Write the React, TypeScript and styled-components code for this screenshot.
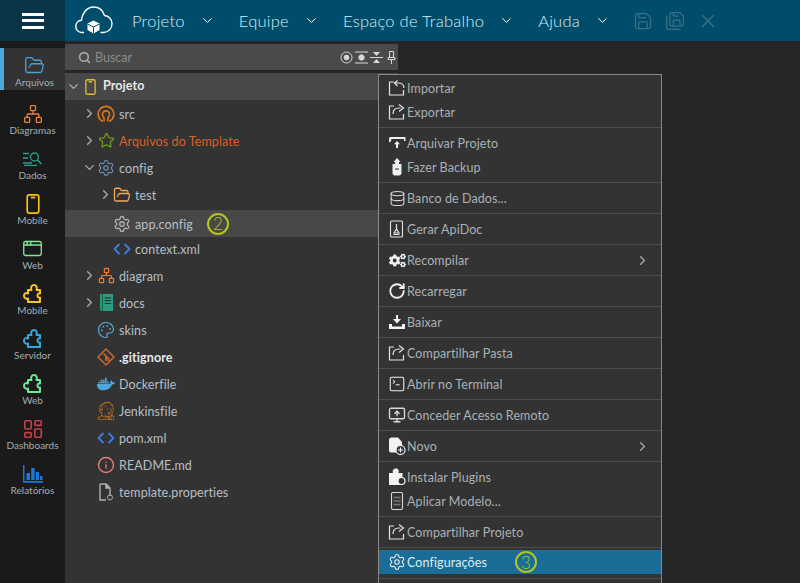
import React from 'react'
import styled, { createGlobalStyle } from 'styled-components'
import {
  AppWindow,
  ChevronDown,
  ChevronRight,
  Code,
  Database,
  FolderOpen,
  Info,
  LayoutDashboard,
  MonitorUp,
  Network,
  Palette,
  RotateCw,
  Save,
  SaveAll,
  Search,
  Settings,
  SquareTerminal,
  Star,
  X
} from 'lucide-react'
import { FaCogs, FaDocker, FaJenkins } from 'react-icons/fa'

const FONT = `Lato, "Open Sans", "Liberation Sans", sans-serif`

const GlobalStyle = createGlobalStyle`
  html, body {
    margin: 0;
    height: 100%;
    background: #262626;
    overflow: hidden;
  }
  body {
    font-family: ${FONT};
  }
`

const CloudLogo = () => (
  <svg width="38" height="30" viewBox="0 0 38 30" fill="none" stroke="#fff" strokeWidth="1.4">
    <path d="M9 26.500H7C3 26.500 .8 23.500 .8 20.500c0-3.400 2.400-6 5.600-6.200C7 8 11.500 1 18.500 1c5.500 0 9.500 3.500 11 8.500 4 .3 7.500 3.500 7.500 8 0 5-3.500 9-8.500 9h-3" />
    <path d="M18.500 14.500l6 3v6.500l-6 3.500-6-3.500v-6.500z" fill="#fff" stroke="none" />
    <path d="M12.500 18l6 3 6-3M18.500 21v6" stroke="#004d6b" strokeWidth="1" />
  </svg>
)

const PhoneIcon = ({ color, width, height }: { color: string; width: number; height: number }) => (
  <svg width={width} height={height} viewBox="0 0 12 18" fill="none" stroke={color} strokeWidth="1.500">
    <rect x=".8" y=".8" width="10.400" height="16.400" rx="1.800" />
    <path d="M4 3.200h4" strokeWidth="1.600" />
  </svg>
)

const PuzzleIcon = ({ color }: { color: string }) => (
  <svg width="21" height="21" viewBox="0 0 21 21" fill="none" stroke={color} strokeWidth="2" strokeLinejoin="round">
    <path d="M6 7h3.500C8.500 4.500 9.500 2 12 2s3.500 2.500 2.500 5H18v3.500c-1.500-.5-2.500.5-2.500 2s1 2.500 2.500 2V19H6v-3.500c-2 .8-4-.5-4-2.800S4 9.500 6 10.500z" />
  </svg>
)

const DadosIcon = () => (
  <svg width="20" height="14" viewBox="0 0 20 14" fill="none" stroke="#2e9e8a" strokeWidth="1.300">
    <path d="M0 1.500h6M0 6h5M0 11h9M1 13.500h13" />
    <circle cx="11.500" cy="5" r="4" />
    <path d="M14.500 8l4 4" strokeWidth="1.600" />
  </svg>
)

const RelatoriosIcon = () => (
  <svg width="20" height="18" viewBox="0 0 20 18" fill="#1a78d8">
    <path d="M0 0h1.500v16H20v1.800H0z" />
    <rect x="3.500" y="8" width="3.500" height="7" />
    <rect x="8.200" y="3" width="3.500" height="12" />
    <rect x="13" y="7" width="3" height="8" />
    <rect x="17" y="11" width="2.500" height="4" />
  </svg>
)

const SrcIcon = () => (
  <svg width="18" height="18" viewBox="0 0 18 18" fill="none" stroke="#d9761a" strokeWidth="1.700" strokeLinecap="round">
    <path d="M5.500 16.200A7.800 7.800 0 1 1 12.500 16.200" />
    <path d="M7.200 15.500l-.4-3.200A3.600 3.600 0 1 1 11.200 12.300l-.4 3.200" />
  </svg>
)

const GitDiamond = () => (
  <svg width="18" height="18" viewBox="0 0 18 18" fill="none" stroke="#c76a2c" strokeWidth="1.500">
    <path d="M9 1l8 8-8 8-8-8z" strokeLinejoin="round" />
    <path d="M6.500 5.500l5 5v2.500M9 8v5" strokeWidth="1.700" />
  </svg>
)

const BoxArrow = ({ back }: { back?: boolean }) => (
  <svg width="18" height="18" viewBox="0 0 18 18" fill="none" stroke="#e4e4e4" strokeWidth="1.200">
    <path d="M6 3H1.500v13h14v-5" />
    {back ? (
      <path d="M16 9c0-3-2-5-6-5H7M9.500 1.500L6.500 4l3 3" />
    ) : (
      <path d="M5 11c0-4 2-6 6-6h1.500M11 1.500L15.500 5 11 8.500" />
    )}
  </svg>
)

const ArchiveIcon = () => (
  <svg width="18" height="18" viewBox="0 0 18 18" fill="#eee">
    <path d="M1 4.500C1 3.500 2 3 3 3h13v2H3.500L2.500 8H1z" />
    <path d="M16 3h1.500v4H16z" />
    <path d="M9 7l3 3.200h-2v3.800H8v-3.800H6z" />
  </svg>
)

const BackupIcon = () => (
  <svg width="18" height="18" viewBox="0 0 18 18" fill="#eee">
    <path d="M9 0l3.500 4H11v2h2.500v9c0 1.500-1 2.500-2.500 2.500H7C5.500 17.500 4.500 16.500 4.500 15V6H7V4H5.500z" />
    <path d="M7 11h4" stroke="#333" strokeWidth="1" />
  </svg>
)

const ApiDocIcon = () => (
  <svg width="18" height="18" viewBox="0 0 18 18" fill="none" stroke="#e4e4e4" strokeWidth="1.100">
    <rect x="2.500" y="1" width="12" height="16" rx="1" />
    <path d="M8.500 4v5M6 13l2.500-4 2.500 4zM5.500 14.500h6" strokeWidth="1.200" />
  </svg>
)

const DownloadIcon = () => (
  <svg width="18" height="18" viewBox="0 0 18 18" fill="#f2f2f2">
    <path d="M8 2h2v4h3l-4 4.500L5 6h3z" />
    <path d="M1 11h3v2.500h10V11h3v5H1z" />
  </svg>
)

const NewFileIcon = () => (
  <svg width="18" height="18" viewBox="0 0 18 18">
    <path d="M1 3c0-1.500 1-2.500 2.500-2.500H10L14 5v10.500H3c-1 0-2-1-2-2z" fill="#f2f2f2" />
    <circle cx="12.500" cy="13" r="4.500" fill="#333" stroke="#f2f2f2" strokeWidth="1.200" />
    <path d="M12.500 10.500v5M10 13h5" stroke="#f2f2f2" strokeWidth="1.200" />
  </svg>
)

const PluginIcon = () => (
  <svg width="18" height="18" viewBox="0 0 18 18">
    <path d="M1 5h4C4 2 6 .5 8 .5S11.500 2.500 10.500 5h4v4c-2-.5-3.500 1-3.500 3s1.500 3.500 3.500 3v2H1z" fill="#f2f2f2" />
    <circle cx="13.500" cy="13" r="3.500" fill="#333" stroke="#f2f2f2" strokeWidth="1.200" />
  </svg>
)

const TemplateIcon = () => (
  <svg width="18" height="18" viewBox="0 0 18 18" fill="none" stroke="#d8d8d8" strokeWidth="1.100">
    <rect x="3.500" y=".5" width="11" height="17" rx="1.500" />
    <path d="M5.500 5.500h7M5.500 9h7M5.500 12.500h7" stroke="#777" strokeWidth="1.400" />
  </svg>
)

const BookIcon = () => (
  <svg width="15" height="17" viewBox="0 0 16 18" fill="#2a9d80">
    <path d="M1 1.500C1 .7 1.700 0 2.500 0H15v18H2.500C1.700 18 1 17.300 1 16.500z" />
    <path d="M6 4h7M6 7h7M6 10h7" stroke="#173f36" strokeWidth="1.200" />
    <path d="M3.500 0v18" stroke="#173f36" strokeWidth=".8" />
  </svg>
)

const DocGearIcon = () => (
  <svg width="18" height="18" viewBox="0 0 18 18" fill="none" stroke="#b0b0b0" strokeWidth="1.400">
    <path d="M3 1h6l4 4v8M3 1v16h6" />
    <path d="M9 1v4h4" fill="#b0b0b0" />
    <circle cx="13" cy="14.500" r="2.500" strokeWidth="1" />
  </svg>
)

const TargetIcon = () => (
  <svg width="13" height="13" viewBox="0 0 13 13" fill="none" stroke="#d8d8d8" strokeWidth="1">
    <circle cx="6.500" cy="6.500" r="5.500" />
    <circle cx="6.500" cy="6.500" r="2.400" fill="#d8d8d8" />
  </svg>
)

const ExpandIcon = () => (
  <svg width="13" height="13" viewBox="0 0 13 13" fill="#d8d8d8">
    <path d="M0 .5h13v1H0zM0 11.500h13v1H0z" />
    <path d="M6.500 3l3 2v3l-3 2-3-2V5z" />
  </svg>
)

const CollapseIcon = () => (
  <svg width="13" height="13" viewBox="0 0 13 13" fill="#d8d8d8">
    <path d="M0 6h13v1H0z" />
    <path d="M3 1h7L6.500 5zM3 12h7L6.500 8z" />
  </svg>
)

const PinIcon = () => (
  <svg width="13" height="13" viewBox="0 0 13 13" fill="none" stroke="#d8d8d8" strokeWidth="1">
    <path d="M4.500 .5h4v6h-4zM3 6.500h7v2H3zM6.500 8.500V13" />
  </svg>
)

const sideItems = [
  { label: 'Arquivos', active: true, icon: <FolderOpen size={21} color="#4a9fd4" strokeWidth={1.5} /> },
  { label: 'Diagramas', icon: <Network size={20} color="#e8803a" strokeWidth={1.6} /> },
  { label: 'Dados', icon: <DadosIcon /> },
  { label: 'Mobile', icon: <PhoneIcon color="#f5c518" width={14} height={20} /> },
  { label: 'Web', icon: <AppWindow size={21} color="#7fe89a" strokeWidth={1.5} /> },
  { label: 'Mobile', icon: <PuzzleIcon color="#f5c32c" /> },
  { label: 'Servidor', icon: <PuzzleIcon color="#2fa8df" /> },
  { label: 'Web', icon: <PuzzleIcon color="#6fe893" /> },
  { label: 'Dashboards', icon: <LayoutDashboard size={22} color="#c2404a" strokeWidth={1.8} /> },
  { label: 'Relatórios', icon: <RelatoriosIcon /> }
]

type Arrow = 'right' | 'down' | 'none'

interface ITreeRow {
  label: string
  level: number
  arrow: Arrow
  icon: React.ReactNode
  tone?: 'normal' | 'orange' | 'bold'
  selected?: boolean
  badge?: string
}

const treeRows: ITreeRow[] = [
  { label: 'src', level: 1, arrow: 'right', icon: <SrcIcon /> },
  { label: 'Arquivos do Template', level: 1, arrow: 'right', tone: 'orange', icon: <Star size={17} color="#6d9a1a" strokeWidth={1.8} /> },
  { label: 'config', level: 1, arrow: 'down', icon: <Settings size={18} color="#7590c4" strokeWidth={1.4} /> },
  { label: 'test', level: 2, arrow: 'right', icon: <FolderOpen size={18} color="#f0a860" strokeWidth={1.7} /> },
  { label: 'app.config', level: 2, arrow: 'none', selected: true, badge: '2', icon: <Settings size={18} color="#b0b0b0" strokeWidth={1.8} /> },
  { label: 'context.xml', level: 2, arrow: 'none', icon: <Code size={18} color="#3a7fe0" strokeWidth={2.4} /> },
  { label: 'diagram', level: 1, arrow: 'right', icon: <Network size={17} color="#e8803a" strokeWidth={1.7} /> },
  { label: 'docs', level: 1, arrow: 'right', icon: <BookIcon /> },
  { label: 'skins', level: 1, arrow: 'none', icon: <Palette size={18} color="#55abdc" strokeWidth={1.6} /> },
  { label: '.gitignore', level: 1, arrow: 'none', tone: 'bold', icon: <GitDiamond /> },
  { label: 'Dockerfile', level: 1, arrow: 'none', icon: <FaDocker size={18} color="#4ea6dc" /> },
  { label: 'Jenkinsfile', level: 1, arrow: 'none', icon: <FaJenkins size={18} color="#e87a10" /> },
  { label: 'pom.xml', level: 1, arrow: 'none', icon: <Code size={18} color="#3a7fe0" strokeWidth={2.4} /> },
  { label: 'README.md', level: 1, arrow: 'none', icon: <Info size={18} color="#e87878" strokeWidth={1.9} /> },
  { label: 'template.properties', level: 1, arrow: 'none', icon: <DocGearIcon /> }
]

interface IMenuItem {
  label: string
  icon: React.ReactNode
  sub?: boolean
  active?: boolean
  badge?: string
}

const menuGroups: IMenuItem[][] = [
  [
    { label: 'Importar', icon: <BoxArrow back /> },
    { label: 'Exportar', icon: <BoxArrow /> }
  ],
  [
    { label: 'Arquivar Projeto', icon: <ArchiveIcon /> },
    { label: 'Fazer Backup', icon: <BackupIcon /> }
  ],
  [{ label: 'Banco de Dados...', icon: <Database size={17} color="#d8d8d8" strokeWidth={1.5} /> }],
  [{ label: 'Gerar ApiDoc', icon: <ApiDocIcon /> }],
  [{ label: 'Recompilar', sub: true, icon: <FaCogs size={17} color="#f0f0f0" /> }],
  [{ label: 'Recarregar', icon: <RotateCw size={18} color="#f0f0f0" strokeWidth={2.4} /> }],
  [{ label: 'Baixar', icon: <DownloadIcon /> }],
  [{ label: 'Compartilhar Pasta', icon: <BoxArrow /> }],
  [{ label: 'Abrir no Terminal', icon: <SquareTerminal size={18} color="#f0f0f0" strokeWidth={1.4} /> }],
  [{ label: 'Conceder Acesso Remoto', icon: <MonitorUp size={18} color="#d8d8d8" strokeWidth={1.8} /> }],
  [{ label: 'Novo', sub: true, icon: <NewFileIcon /> }],
  [
    { label: 'Instalar Plugins', icon: <PluginIcon /> },
    { label: 'Aplicar Modelo...', icon: <TemplateIcon /> }
  ],
  [{ label: 'Compartilhar Projeto', icon: <BoxArrow /> }],
  [{ label: 'Configurações', active: true, badge: '3', icon: <Settings size={18} color="#f0f0f0" strokeWidth={1.4} /> }]
]

const navItems = ['Projeto', 'Equipe', 'Espaço de Trabalho', 'Ajuda']

const App: React.FC = () => {
  return (
    <Page>
      <GlobalStyle />
      <Header>
        <BurgerCell>
          <BurgerBar />
          <BurgerBar />
          <BurgerBar />
        </BurgerCell>
        <LogoCell>
          <CloudLogo />
        </LogoCell>
        <Nav>
          {navItems.map(item => (
            <NavItem key={item}>
              <NavLabel>{item}</NavLabel>
              <ChevronDown size={15} color="#fff" strokeWidth={1.6} />
            </NavItem>
          ))}
        </Nav>
        <HeaderTools>
          <Save size={20} strokeWidth={1.5} />
          <SaveAll size={20} strokeWidth={1.5} />
          <X size={22} strokeWidth={1.5} />
        </HeaderTools>
      </Header>
      <Body>
        <Sidebar>
          {sideItems.map((item, i) => (
            <SideItem key={i} $active={item.active}>
              <SideIcon>{item.icon}</SideIcon>
              <SideLabel>{item.label}</SideLabel>
            </SideItem>
          ))}
        </Sidebar>
        <Explorer>
          <SearchBar>
            <Search size={13} color="#aaa" strokeWidth={3} />
            <SearchText>Buscar</SearchText>
            <SearchTools>
              <TargetIcon />
              <ExpandIcon />
              <CollapseIcon />
              <PinIcon />
            </SearchTools>
          </SearchBar>
          <Tree>
            <RootRow>
              <ArrowCell>
                <ChevronDown size={15} color="#aaa" strokeWidth={2.2} />
              </ArrowCell>
              <IconCell>
                <PhoneIcon color="#e8b830" width={11} height={16} />
              </IconCell>
              <RootLabel>Projeto</RootLabel>
            </RootRow>
            {treeRows.map(row => (
              <TreeLine key={row.label} $level={row.level} $selected={row.selected}>
                <ArrowCell>
                  {row.arrow === 'right' && <ChevronRight size={15} color="#aaa" strokeWidth={2.2} />}
                  {row.arrow === 'down' && <ChevronDown size={15} color="#aaa" strokeWidth={2.2} />}
                </ArrowCell>
                <IconCell>{row.icon}</IconCell>
                <TreeLabel $tone={row.tone}>{row.label}</TreeLabel>
                {row.badge && <StepBadge $gap={14}>{row.badge}</StepBadge>}
              </TreeLine>
            ))}
          </Tree>
        </Explorer>
        <Menu>
          {menuGroups.map((group, i) => (
            <MenuGroup key={i}>
              {group.map(item => (
                <MenuItem key={item.label} $active={item.active}>
                  <MenuIcon>{item.icon}</MenuIcon>
                  <MenuLabel $active={item.active}>{item.label}</MenuLabel>
                  {item.badge && <StepBadge $gap={28}>{item.badge}</StepBadge>}
                  {item.sub && (
                    <SubArrow>
                      <ChevronRight size={15} color="#aaa" strokeWidth={2} />
                    </SubArrow>
                  )}
                </MenuItem>
              ))}
            </MenuGroup>
          ))}
        </Menu>
      </Body>
    </Page>
  )
}

const Page = styled.div`
  width: 800px;
  height: 583px;
  display: flex;
  flex-direction: column;
  overflow: hidden;
  background: #262626;
`

const Header = styled.header`
  height: 41px;
  flex-shrink: 0;
  display: flex;
  align-items: center;
  background: #004d6b;
`

const BurgerCell = styled.div`
  width: 65px;
  height: 100%;
  display: flex;
  flex-direction: column;
  align-items: center;
  justify-content: center;
  gap: 3.5px;
  background: #0a3549;
`

const BurgerBar = styled.span`
  width: 22px;
  height: 3px;
  background: #fff;
`

const LogoCell = styled.div`
  width: 67px;
  display: flex;
  padding-left: 10px;
  box-sizing: border-box;
`

const Nav = styled.nav`
  display: flex;
  align-items: center;
`

const NavItem = styled.div`
  display: flex;
  align-items: center;
  gap: 15px;
  margin-right: 24px;
`

const NavLabel = styled.span`
  font-size: 16.5px;
  font-weight: 300;
  letter-spacing: 0.25px;
  color: #d6edf6;
`

const HeaderTools = styled.div`
  display: flex;
  align-items: center;
  gap: 12px;
  margin-left: -1px;
  color: #3a7085;
`

const Body = styled.div`
  position: relative;
  flex: 1;
  display: flex;
  min-height: 0;
`

const Sidebar = styled.aside`
  width: 65px;
  flex-shrink: 0;
  padding-top: 7px;
  box-sizing: border-box;
  background: #1a1a1a;
`

const SideItem = styled.div<{ $active?: boolean }>`
  height: 42px;
  margin-bottom: ${p => (p.$active ? '6px' : '3px')};
  display: flex;
  flex-direction: column;
  align-items: center;
  box-sizing: border-box;
  background: ${p => (p.$active ? '#333' : 'transparent')};
  border-left: ${p => (p.$active ? '4px solid #4ea8d8' : 'none')};
`

const SideIcon = styled.div`
  height: 21px;
  margin-top: 7px;
  display: flex;
  align-items: center;
  justify-content: center;
`

const SideLabel = styled.span`
  font-size: 10px;
  line-height: 13px;
  color: #a3adb3;
`

const Explorer = styled.div`
  width: 333px;
  flex-shrink: 0;
  padding-top: 3px;
  display: flex;
  flex-direction: column;
  gap: 3px;
`

const SearchBar = styled.div`
  height: 26px;
  flex-shrink: 0;
  display: flex;
  align-items: center;
  padding: 0 0 0 13px;
  background: #4a4a4a;
`

const SearchText = styled.span`
  margin-left: 4px;
  font-size: 12.5px;
  color: #8b8b8b;
`

const SearchTools = styled.div`
  margin-left: auto;
  display: flex;
  align-items: center;
  gap: 2px;
`

const Tree = styled.div`
  flex: 1;
  background: #333;
`

const RootRow = styled.div`
  height: 27px;
  display: flex;
  align-items: center;
  background: #484848;
`

const TreeLine = styled.div<{ $level: number; $selected?: boolean }>`
  height: 27px;
  display: flex;
  align-items: center;
  padding-left: ${p => p.$level * 16}px;
  margin: ${p => (p.$selected ? '2px 0 -2px' : '0')};
  background: ${p => (p.$selected ? '#484848' : 'transparent')};
`

const ArrowCell = styled.div`
  width: 16px;
  display: flex;
  justify-content: center;
  flex-shrink: 0;
`

const IconCell = styled.div`
  width: 18px;
  height: 18px;
  margin-right: 4px;
  display: flex;
  align-items: center;
  justify-content: center;
  flex-shrink: 0;
`

const RootLabel = styled.span`
  font-size: 12.5px;
  font-weight: 700;
  letter-spacing: 0.1px;
  padding-bottom: 2px;
  color: #e8e8e8;
`

const TreeLabel = styled.span<{ $tone?: string }>`
  font-size: 12.5px;
  letter-spacing: 0.1px;
  padding-top: 1px;
  font-weight: ${p => (p.$tone === 'bold' ? 700 : 400)};
  color: ${p => (p.$tone === 'orange' ? '#d8602a' : p.$tone === 'bold' ? '#e8e8e8' : '#b5bfc6')};
`

const StepBadge = styled.span<{ $gap: number }>`
  width: 22px;
  height: 22px;
  margin-left: ${p => p.$gap}px;
  box-sizing: border-box;
  display: flex;
  align-items: center;
  justify-content: center;
  border: 2px solid #b5c41e;
  border-radius: 50%;
  font-size: 17px;
  font-weight: 300;
  color: #b5c41e;
`

const Menu = styled.div`
  position: absolute;
  top: 33px;
  left: 378px;
  width: 284px;
  height: 520px;
  box-sizing: border-box;
  border: 1px solid #8a8a8a;
  border-bottom: none;
  background: #333;
`

const MenuGroup = styled.div`
  padding: 3px 0;
  border-bottom: 1px solid #4d4d4d;

  &:first-child {
    padding-top: 1px;
  }

  &:last-child {
    padding: 2px 0 4px;
  }
`

const MenuItem = styled.div<{ $active?: boolean }>`
  height: 24px;
  display: flex;
  align-items: center;
  padding-left: 9px;
  background: ${p => (p.$active ? '#1a6d97' : 'transparent')};
`

const MenuIcon = styled.div`
  width: 18px;
  height: 18px;
  margin-right: 1px;
  display: flex;
  align-items: center;
  justify-content: center;
`

const MenuLabel = styled.span<{ $active?: boolean }>`
  font-size: 12.5px;
  letter-spacing: 0.1px;
  color: ${p => (p.$active ? '#dcecf4' : '#a9b1b6')};
`

const SubArrow = styled.div`
  margin-left: auto;
  padding-right: 11px;
  display: flex;
`

export default App
